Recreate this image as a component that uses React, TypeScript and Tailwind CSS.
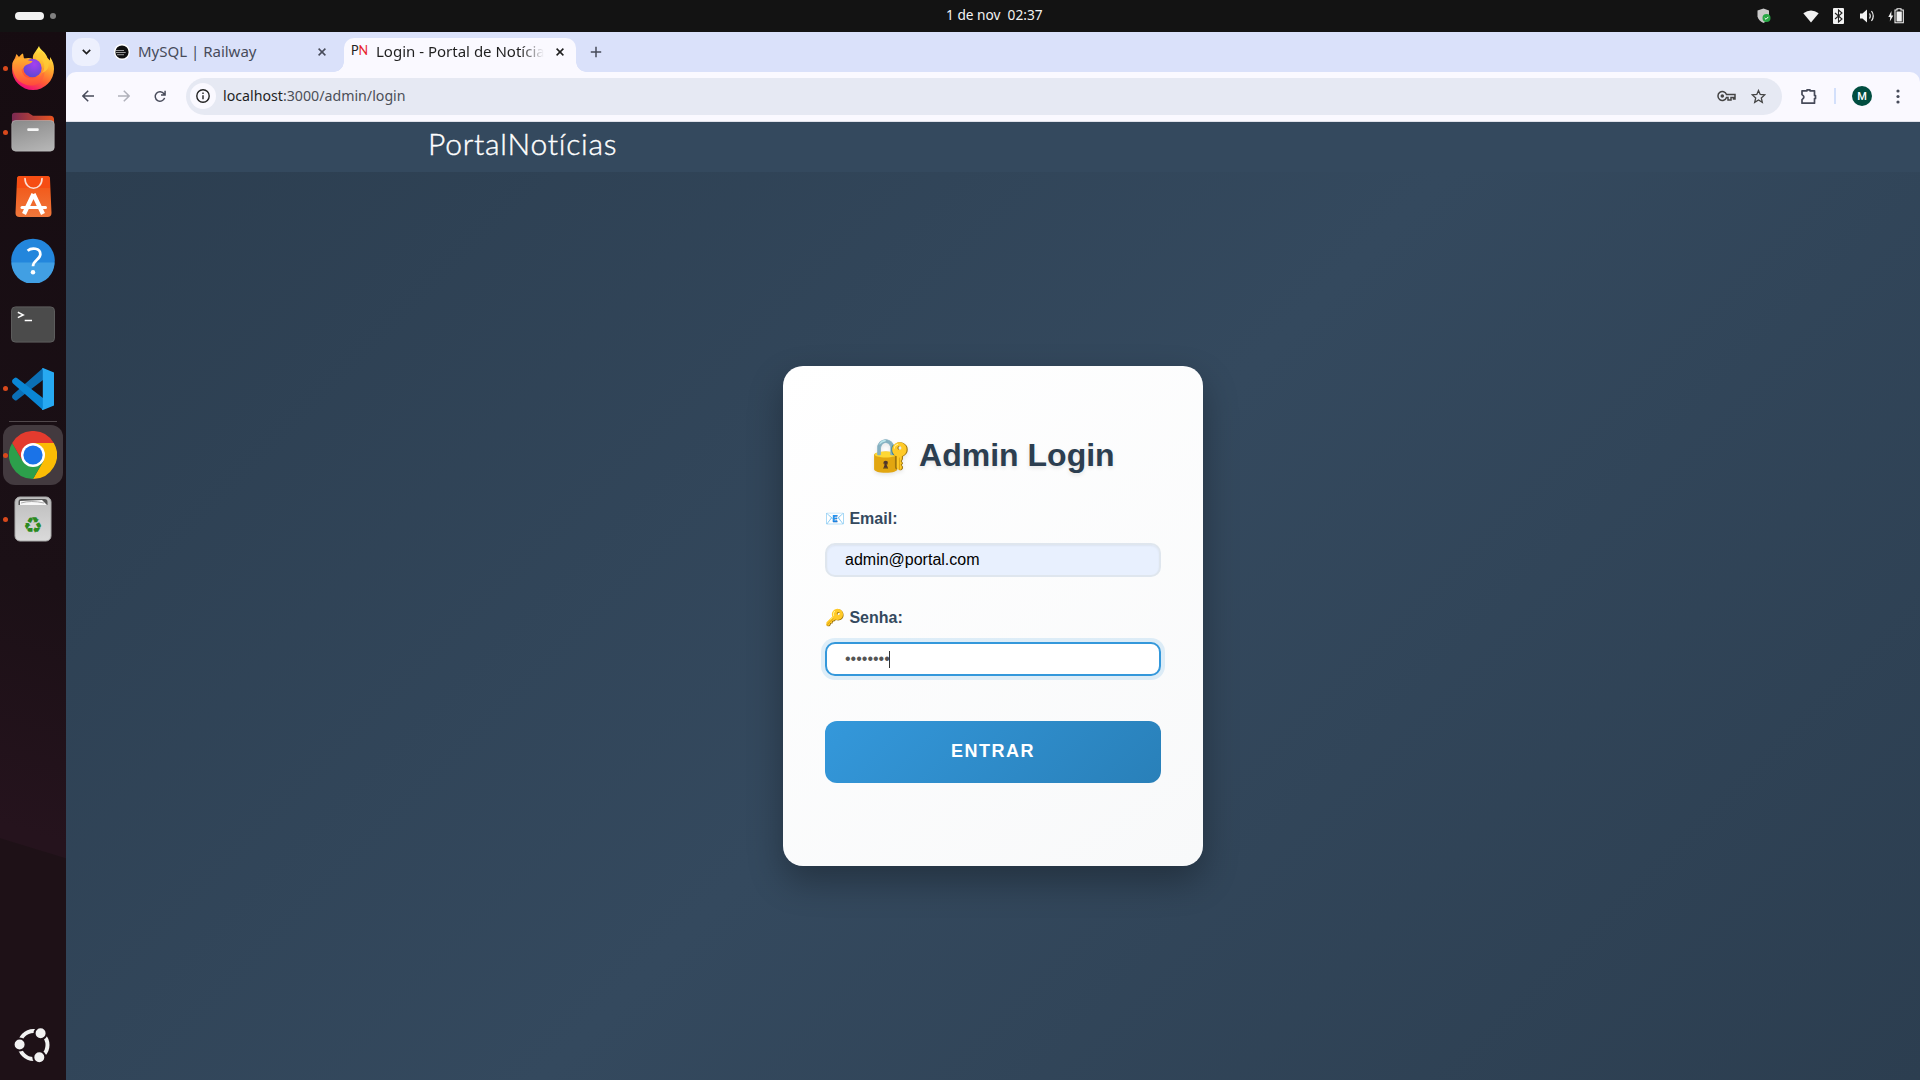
import React from 'react';

function Dot({ on }: { on?: boolean }) {
  return <span className={on ? 'ml-[3px] size-[5px] shrink-0 rounded-full bg-[#d9491c]' : 'ml-[3px] size-[5px] shrink-0'} />;
}

function DockItem({ on, children }: { on?: boolean; children: React.ReactNode }) {
  return (
    <div className="flex h-16 items-center">
      <Dot on={on} />
      <span className="ml-[3px] flex w-11 justify-center">{children}</span>
    </div>
  );
}

function Firefox() {
  return (
    <svg width="44" height="44" viewBox="0 0 44 44">
      <defs>
        <linearGradient id="ff1" x1="0.8" y1="0.05" x2="0.35" y2="1">
          <stop offset="0" stopColor="#fff04a" />
          <stop offset="0.35" stopColor="#ffb22e" />
          <stop offset="0.7" stopColor="#ff5a35" />
          <stop offset="1" stopColor="#f00a7c" />
        </linearGradient>
        <linearGradient id="ff2" x1="0" y1="0" x2="0" y2="1">
          <stop offset="0" stopColor="#ffb02e" />
          <stop offset="1" stopColor="#ff4a3c" />
        </linearGradient>
        <radialGradient id="ff3" cx="0.6" cy="0.3" r="0.75">
          <stop offset="0" stopColor="#a63ff0" />
          <stop offset="1" stopColor="#5a48d2" />
        </radialGradient>
      </defs>
      <path d="M28 0c1 4 7 6 8.500 12l2.500 2.500 0-3.500c3 4 4 8 4 12a21 21 0 1 1-42 0c0-5 1-8 3-11l1.500-4 2.500 3c1-1.500 2.500-3 4-3.500l1 5c3-.5 6-.8 9 .5C21 8 25 6 28 0z" fill="url(#ff1)" />
      <circle cx="21.500" cy="22" r="9.200" fill="url(#ff3)" />
      <path d="M1.500 17c2-5 6-6 10-5 3 .6 5 3 10 3-1 3-5 3-7 4.500-2 1-1 3-4 4 1 7 6 9 11 9 7 0 11-4 11-11 3 8-2 18-12 18S1 32 1.500 17z" fill="url(#ff2)" />
      <path d="M31 14c3 4 3 9 0 13 6-2 8-7 6-14-2-3-5-5-6-8-4 3-6 5-6 8z" fill="#ffcb35" opacity="0.75" />
    </svg>
  );
}

function Folder() {
  return (
    <svg width="46" height="42" viewBox="0 0 46 42">
      <defs>
        <linearGradient id="fo1" x1="0" x2="1"><stop offset="0" stopColor="#7a2952" /><stop offset="1" stopColor="#e95420" /></linearGradient>
        <linearGradient id="fo2" x1="0.300" y1="0" x2="0.700" y2="1"><stop offset="0" stopColor="#8d8d8d" /><stop offset="1" stopColor="#b4b4b4" /></linearGradient>
      </defs>
      <path d="M1 4a3 3 0 0 1 3-3h14l5 3h18a4 4 0 0 1 4 4v10H1z" fill="url(#fo1)" />
      <rect x="0.750" y="9" width="44.500" height="32" rx="4" fill="url(#fo2)" stroke="#c5c5c5" strokeOpacity="0.500" />
      <rect x="17" y="17" width="12" height="3" rx="1" fill="#f7f7f7" />
    </svg>
  );
}

function AppCenter() {
  return (
    <svg width="37" height="43" viewBox="0 0 37 43">
      <defs><linearGradient id="ac" x1="0" y1="0" x2="0" y2="1"><stop offset="0" stopColor="#f4500f" /><stop offset="1" stopColor="#ef773c" /></linearGradient></defs>
      <path d="M5 1h27a3 3 0 0 1 3 3l1.500 34a4 4 0 0 1-4 4h-28a4 4 0 0 1-4-4L2 4a3 3 0 0 1 3-3z" fill="url(#ac)" />
      <path d="M2 4a3 3 0 0 1 3-3h27a3 3 0 0 1 3 3v9H2z" fill="#f64d13" />
      <path d="M10 3.500c0 13 17 13 17 0" fill="none" stroke="#fbe0d5" strokeWidth="1.600" strokeLinecap="round" />
      <path d="M18.500 19 9 39M18.500 19 28 39" stroke="#fff" strokeWidth="4.300" fill="none" strokeLinejoin="round" />
      <path d="M7 32.500h23.500" stroke="#fff" strokeWidth="3" strokeLinecap="round" />
    </svg>
  );
}

function Help() {
  return (
    <svg width="45" height="45" viewBox="0 0 45 45">
      <circle cx="22.500" cy="22.500" r="22.300" fill="#2386dc" />
      <path d="M.5 24.500h44a22 22 0 0 1-44 0z" fill="#419fe3" />
      <path d="M17 12.500C21 9 30 9.500 30 16c0 5.500-7.500 6-7.500 12.500" stroke="#fff" strokeWidth="2.800" fill="none" />
      <circle cx="22.500" cy="34.500" r="2.300" fill="#fff" />
    </svg>
  );
}

function Terminal() {
  return (
    <svg width="45" height="37" viewBox="0 0 45 37">
      <rect x="0.500" y="0.500" width="44" height="36" rx="4" fill="#4b4b4b" stroke="#5e5e5e" />
      <path d="m7 6 5.500 2.700L7 11.400M14 14.500h7.500" stroke="#fff" strokeWidth="1.500" fill="none" />
    </svg>
  );
}

function VsCode() {
  return (
    <svg className="mt-px" width="42" height="42" viewBox="0 0 42 42">
      <path d="M1 26.500 31 0v12L5 32a2 2 0 0 1-2.500 0L.7 30.500c-1-1-.8-3 .3-4z" fill="#0b6fb5" />
      <path d="M1 15.500 31 42V30L5 10a2 2 0 0 0-2.500 0L.7 11.500c-1 1-.8 3 .3 4z" fill="#0a86d4" />
      <path d="M31 0 42 4.500v33L31 42c-1 .3-1.500-1-.2-2V2c-1-1-.7-2 .2-2z" fill="#27a9f2" />
    </svg>
  );
}

function Chrome() {
  return (
    <svg width="48" height="48" viewBox="0 0 48 48">
      <path d="M24 12h20.800A24 24 0 0 1 24 48l10.400-18z" fill="#fbbc05" />
      <path d="M13.600 30 3.200 12A24 24 0 0 0 24 48l10.400-18z" fill="#2c9f4b" />
      <path d="M13.600 30 3.200 12A24 24 0 0 1 44.800 12H24z" fill="#e33b2e" />
      <circle cx="24" cy="24" r="12" fill="#fff" />
      <circle cx="24" cy="24" r="9.600" fill="#1a73e8" />
    </svg>
  );
}

function Trash() {
  return (
    <svg width="38" height="46" viewBox="0 0 38 46">
      <defs><linearGradient id="tr" x1="0" y1="0" x2="0" y2="1"><stop offset="0" stopColor="#bdbdbd" /><stop offset="1" stopColor="#dadada" /></linearGradient></defs>
      <rect x="1" y="1" width="36" height="44" rx="5" fill="url(#tr)" stroke="#aaa" />
      <path d="M4.500 9V6q0-3 3-3h23q3 0 3 3v3z" fill="#555" />
      <path d="M6 9V5l22-1 5 5z" fill="#f7f7f7" />
      <path d="M7 7q10-3 23 0" stroke="#aaa" fill="none" />
      <text x="19" y="36.500" textAnchor="middle" fontSize="22" fill="#2b8a1f" className="font-['DejaVu_Sans']">♻</text>
    </svg>
  );
}

function Ubuntu() {
  return (
    <svg width="36" height="36" viewBox="0 0 36 36">
      <circle cx="19.500" cy="18" r="14" fill="none" stroke="#f2f2f2" strokeWidth="4" />
      <g fill="#f2f2f2" stroke="#1e1117" strokeWidth="2">
        <circle cx="5.600" cy="17.500" r="6" /><circle cx="26.600" cy="6.300" r="6" /><circle cx="25.300" cy="30.300" r="6" />
      </g>
    </svg>
  );
}

function Dock() {
  return (
    <aside className="flex w-[66px] shrink-0 flex-col bg-[linear-gradient(197deg,#160c11_0%,#1b1016_52%,#25131d_76%,#25131d_77.300%,#1e1117_77.400%)]">
      <div className="flex flex-col pt-1">
        <DockItem on><Firefox /></DockItem>
        <DockItem on><Folder /></DockItem>
        <DockItem><AppCenter /></DockItem>
        <DockItem><Help /></DockItem>
        <DockItem><Terminal /></DockItem>
        <DockItem on><VsCode /></DockItem>
      </div>
      <div className="mx-[9px] mt-px h-px bg-[#51484c]" />
      <div className="ml-[3px] mt-[3px] flex h-[60px] w-[60px] items-center rounded-[12px] bg-[#433a3f]">
        <span className="size-[5px] rounded-full bg-[#d9491c]" />
        <span className="ml-px"><Chrome /></span>
      </div>
      <div className="mt-[2px]"><DockItem on><Trash /></DockItem></div>
      <div className="mt-auto pb-[17px] pl-[14px]"><Ubuntu /></div>
    </aside>
  );
}

function TopBar() {
  return (
    <header className="flex h-8 items-center bg-[#131313] text-[#f2f2f2]">
      <span className="ml-[15px] h-2 w-[29px] rounded-full bg-[#f2f2f2]" />
      <span className="ml-[6px] size-[6px] rounded-full bg-[#808080]" />
      <span className="-mt-[2px] ml-[890px] w-[100px] whitespace-pre font-['Noto_Sans'] text-[13.700px] leading-[30px]">1 de nov  02:37</span>
      <div className="ml-auto flex items-center pr-[16px]">
        <svg className="mr-[32px]" width="14" height="16" viewBox="0 0 14 16">
          <path d="M6.500.5 12 2.500v6q-1 4-5.500 6.500Q1.500 12.500.5 8.500v-6z" fill="#c9c9c9" />
          <circle cx="9.500" cy="10" r="4" fill="#28a745" /><path d="m7.700 10 1.300 1.300 2.300-2.400" stroke="#fff" fill="none" />
        </svg>
        <svg className="mr-[14px]" width="16" height="13" viewBox="0 0 16 13"><path d="M.3 3.300Q8-2.300 15.700 3.300L8 12.500z" fill="#f2f2f2" /></svg>
        <svg className="mr-[16px]" width="11" height="16" viewBox="0 0 11 16"><rect width="11" height="16" rx="1" fill="#f2f2f2" /><path d="m2 5 7 6-3.500 3V2L9 5l-7 6" fill="none" stroke="#222" strokeWidth="1.100" /></svg>
        <svg className="mr-[13px]" width="15" height="14" viewBox="0 0 15 14"><path d="M0 4.500h2.500L7 .5v13l-4.500-4H0z" fill="#f2f2f2" /><path d="M9.500 4.500q1.500 2.500 0 5M11.500 2q3.500 5 0 10" fill="none" stroke="#f2f2f2" strokeWidth="1.200" /></svg>
        <svg width="16" height="16" viewBox="0 0 16 16"><path d="m3.500 3-3.200 6h2l-.5 4.500L5.300 7.500h-2z" fill="#f2f2f2" /><path d="M7 2h2V.7h4V2h2.300v12.800H7z" fill="none" stroke="#f2f2f2" strokeWidth="1.100" /><rect x="8.500" y="3.500" width="5.300" height="10" fill="#f2f2f2" /></svg>
      </div>
    </header>
  );
}

function Close({ color }: { color: string }) {
  return <svg width="8" height="8" viewBox="0 0 8 8"><path d="m.6.6 6.800 6.800M7.400.6.6 7.400" stroke={color} strokeWidth="1.500" /></svg>;
}

function TabStrip() {
  return (
    <div className="flex h-10 bg-[#dae1fa] font-['Noto_Sans'] text-[15px]">
      <div className="ml-[6px] mt-[6px] flex size-7 items-center justify-center rounded-[10px] bg-[#edf0fd]">
        <svg width="9" height="6" viewBox="0 0 9 6"><path d="m.8.8 3.700 3.700L8.200.8" fill="none" stroke="#1f1f1f" strokeWidth="1.700" /></svg>
      </div>
      <div className="ml-[14px] flex h-10 w-[212px] items-center">
        <svg width="16" height="20" viewBox="0 0 16 20"><circle cx="8" cy="10" r="8" fill="#fff" /><circle cx="8" cy="10" r="6.600" fill="#111" /><path d="M2 8.500h8M1.700 10.500h10M3 12.700h7" stroke="#999" /></svg>
        <span className="ml-2 pb-[2px] text-[#474b5a]">MySQL | Railway</span>
        <span className="ml-auto"><Close color="#474b5a" /></span>
      </div>
      <div className="relative ml-[18px] mt-[6px] flex h-[34px] w-[232px] items-center rounded-t-[10px] bg-[#faf9ff] pb-[6px] before:absolute before:bottom-0 before:-left-[10px] before:size-[10px] before:bg-[radial-gradient(circle_at_0_0,transparent_9.500px,#faf9ff_10px)] after:absolute after:bottom-0 after:-right-[10px] after:size-[10px] after:bg-[radial-gradient(circle_at_100%_0,transparent_9.500px,#faf9ff_10px)]">
        <span className="ml-[7px] w-[17px] pb-px font-['Lato'] text-[12.500px] leading-none text-[#222]">P<span className="text-[#e8202a]">N</span></span>
        <span className="-mt-[2px] ml-[8px] w-[168px] overflow-hidden whitespace-nowrap bg-[linear-gradient(90deg,#1f1f1f_86%,transparent_100%)] bg-clip-text text-transparent">Login - Portal de Notícias</span>
        <span className="ml-[12px]"><Close color="#1f1f1f" /></span>
      </div>
      <svg className="ml-[14px] mt-[14px]" width="12" height="12" viewBox="0 0 12 12"><path d="M6 .8v10.400M.8 6h10.400" stroke="#474b5a" strokeWidth="1.500" /></svg>
    </div>
  );
}

function Toolbar() {
  return (
    <div className="bg-[#dae1fa]">
      <div className="flex h-[50px] items-center rounded-t-[10px] border-b border-[#dfe1ea] bg-[#faf9ff] pb-px text-[#474b5a]">
        <svg className="ml-4" width="12" height="12" viewBox="0 0 12 12"><path d="M12 6H1M6.200.7.900 6l5.300 5.300" fill="none" stroke="#474b5a" strokeWidth="1.500" /></svg>
        <svg className="ml-6" width="12" height="12" viewBox="0 0 12 12"><path d="M0 6h11M5.800.7 11.100 6l-5.300 5.300" fill="none" stroke="#b0b1bb" strokeWidth="1.500" /></svg>
        <svg className="ml-6" width="12" height="13" viewBox="0 0 13 14"><path d="M11.500 8.500A5.200 5.200 0 1 1 10.800 4L12 5.200M12 .8v4.500H7.600" fill="none" stroke="#474b5a" strokeWidth="1.600" /></svg>
        <div className="ml-[20px] flex h-[37px] w-[1596px] items-center rounded-full bg-[#e6e9f3] font-['Noto_Sans'] text-[14.200px]">
          <span className="ml-1 flex size-[26px] items-center justify-center rounded-full bg-[#faf9ff]">
            <svg width="14" height="14" viewBox="0 0 14 14"><circle cx="7" cy="7" r="6.200" fill="none" stroke="#222" strokeWidth="1.400" /><path d="M7 6.200v4M7 3.600v1.500" stroke="#222" strokeWidth="1.400" /></svg>
          </span>
          <span className="ml-[7px]"><span className="text-[#1f1f1f]">localhost</span><span className="text-[#4c4f58]">:3000/admin/login</span></span>
          <svg className="ml-auto" width="19" height="12" viewBox="0 0 19 12"><path d="M9.500 4.500H18V9h-1.500V7.500H14V10h-3V7.500H9.500A4.400 4.400 0 1 1 9.500 4.500z" fill="none" stroke="#444" strokeWidth="1.500" /><circle cx="5.300" cy="6" r="1.800" fill="#444" /></svg>
          <svg className="ml-[15px] mr-[16px]" width="15" height="15" viewBox="0 0 15 15"><path d="m7.500 1.500 1.700 4 4.500.4-3.400 3 1 4.400-3.800-2.300-3.800 2.300 1-4.400-3.400-3 4.500-.4z" fill="none" stroke="#444" strokeWidth="1.300" /></svg>
        </div>
        <svg className="ml-[18px]" width="18" height="17" viewBox="0 0 18 17"><path d="M2 2.800h5v-1h3v1h4.500v4.700h1v3h-1v4.700H2v-3.600q3.800-2.500 0-5z" fill="none" stroke="#474b5a" strokeWidth="1.700" strokeLinejoin="round" /></svg>
        <span className="ml-[16px] h-4 w-[2px] bg-[#d3e0fb]" />
        <span className="ml-[16px] flex size-5 items-center justify-center rounded-full bg-[#004d40] pt-px font-['Roboto'] text-[11px] leading-none font-medium text-white">M</span>
        <svg className="ml-6" width="4" height="15" viewBox="0 0 4 15" fill="#474b5a"><circle cx="2" cy="2" r="1.600" /><circle cx="2" cy="7.500" r="1.600" /><circle cx="2" cy="13" r="1.600" /></svg>
      </div>
    </div>
  );
}

function LoginCard() {
  return (
    <form className="flex h-[500px] w-[420px] flex-col rounded-[20px] bg-[linear-gradient(145deg,#ffffff_0%,#f8f9fa_100%)] px-[42px] pt-[66px] font-['Liberation_Sans'] shadow-[0_15px_35px_rgba(0,0,0,0.3)]">
      <h1 className="flex h-[46px] items-center justify-center whitespace-pre text-[32px] font-bold text-[#2c3e50] [text-shadow:0_2px_4px_rgba(0,0,0,0.1)]">🔐 Admin Login</h1>
      <label className="mt-[30px] h-[22px] text-[16px] leading-[22px] font-bold text-[#34495e]">📧 Email:</label>
      <div className="mt-[13px] flex h-[34px] items-center rounded-[10px] border-2 border-[#dfe6ee] bg-[#e8f0fe] pl-[18px] text-[16px] text-black shadow-[inset_0_1px_2px_rgba(0,0,0,0.05)]">admin@portal.com</div>
      <label className="mt-[30px] h-[22px] text-[16px] leading-[22px] font-bold text-[#34495e]">🔑 Senha:</label>
      <div className="mt-[13px] flex h-[34px] items-center rounded-[10px] border-2 border-[#3498db] bg-white pl-[18px] text-[16px] text-[#555] shadow-[0_0_0_4px_rgba(52,152,219,0.15)]">
        <span>••••••••</span><span className="-ml-px h-[17px] w-px bg-[#333]" />
      </div>
      <button type="button" className="mt-[45px] h-[62px] rounded-[12px] bg-[linear-gradient(135deg,#3498db,#2980b9)] pb-[2px] text-[18px] font-bold tracking-[1.500px] text-white">ENTRAR</button>
    </form>
  );
}

export default function App() {
  return (
    <div className="flex h-[1080px] w-[1920px] flex-col overflow-hidden">
      <TopBar />
      <div className="flex min-h-0 flex-1">
        <Dock />
        <main className="flex min-w-0 flex-1 flex-col">
          <TabStrip />
          <Toolbar />
          <div className="flex h-[50px] items-start bg-[#34495e] pl-[362px]">
            <span className="whitespace-nowrap font-['Lato'] text-[30px] leading-[43px] font-light tracking-[0.760px] text-white [-webkit-text-stroke:0.400px_white]">PortalNotícias</span>
          </div>
          <div className="flex flex-1 justify-center bg-[linear-gradient(135deg,#2c3e50_0%,#34495e_50%,#2c3e50_100%)] pt-[194px]">
            <LoginCard />
          </div>
        </main>
      </div>
    </div>
  );
}
